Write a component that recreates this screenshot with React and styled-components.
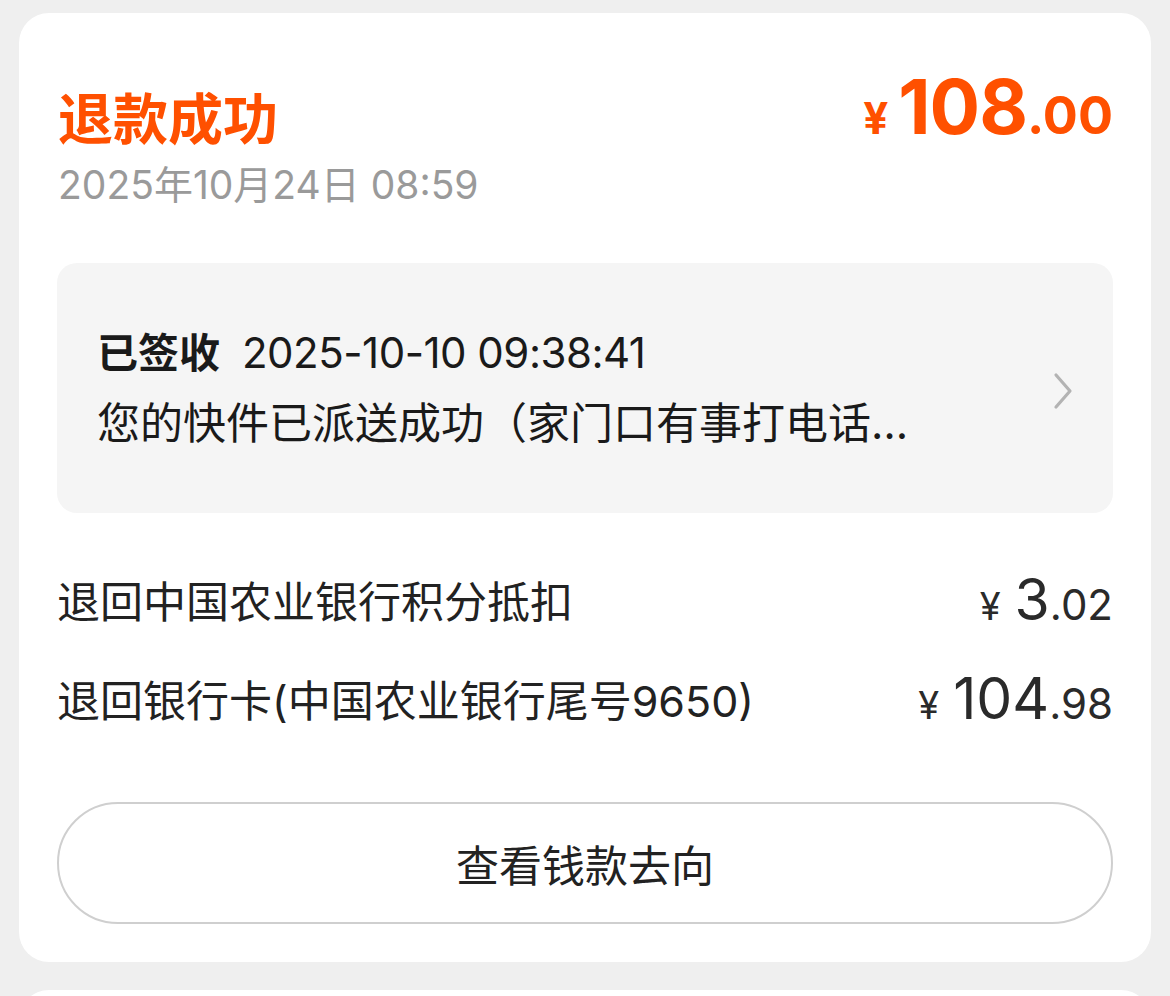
import React from 'react';
import styled, { createGlobalStyle } from 'styled-components';

const GlobalStyle = createGlobalStyle`
    html, body {
        margin: 0;
        padding: 0;
        background: #efefef;
    }
    body {
        font-family: 'Inter', 'Noto Sans CJK SC', sans-serif;
        color: #222;
    }
`;

const rows = [
    { label: '退回中国农业银行积分抵扣', whole: '3', cents: '02' },
    { label: '退回银行卡(中国农业银行尾号9650)', whole: '104', cents: '98' },
];

const App = () => (
    <Page>
        <GlobalStyle />
        <Card>
            <Header>
                <div>
                    <Status>退款成功</Status>
                    <Date>2025年10月24日 08:59</Date>
                </div>
                <Total>
                    <Yen>¥</Yen>
                    <Whole>108</Whole>
                    <Cents>.00</Cents>
                </Total>
            </Header>

            <Logistics>
                <LogisticsText>
                    <LogisticsTitle>
                        <strong>已签收</strong>
                        <span>2025-10-10 09:38:41</span>
                    </LogisticsTitle>
                    <LogisticsDesc>您的快件已派送成功（家门口有事打电话…</LogisticsDesc>
                </LogisticsText>
                <Chevron viewBox="0 0 24 40" width="24" height="40">
                    <path d="M5 4 L19 20 L5 36" fill="none" stroke="#b3b3b3" strokeWidth="3.2" strokeLinecap="round" strokeLinejoin="round" />
                </Chevron>
            </Logistics>

            <Rows>
                {rows.map(row => (
                    <Row key={row.label}>
                        <RowLabel>{row.label}</RowLabel>
                        <RowAmount>
                            <SmallYen>¥</SmallYen>
                            <RowWhole>{row.whole}</RowWhole>
                            <RowCents>.{row.cents}</RowCents>
                        </RowAmount>
                    </Row>
                ))}
            </Rows>

            <Button>查看钱款去向</Button>
        </Card>
        <NextCard />
    </Page>
);

const Page = styled.div`
    padding: 13px 19px 0;
    height: 996px;
    box-sizing: border-box;
    overflow: hidden;
`;

const Card = styled.div`
    background: #fff;
    border-radius: 30px;
    padding: 76px 38px 38px 38px;
    height: 949px;
    box-sizing: border-box;
`;

const Header = styled.div`
    display: flex;
    justify-content: space-between;
    align-items: flex-start;
`;

const Status = styled.div`
    font-size: 55px;
    line-height: 60px;
    font-weight: 700;
    color: #ff5000;
    margin-left: 1px;
`;

const Date = styled.div`
    margin-top: 14px;
    font-size: 39px;
    line-height: 44px;
    color: #9a9a9a;
    margin-left: 1px;
`;

const Total = styled.div`
    display: flex;
    align-items: baseline;
    color: #ff5000;
    font-weight: 700;
    margin-top: -28px;
`;

const Yen = styled.span`
    font-size: 44px;
    margin-right: 10px;
`;

const Whole = styled.span`
    font-size: 75px;
    letter-spacing: -1px;
`;

const Cents = styled.span`
    font-size: 52px;
`;

const Logistics = styled.div`
    margin-top: 56px;
    background: #f5f5f5;
    border-radius: 20px;
    height: 250px;
    box-sizing: border-box;
    padding: 0 38px 0 40px;
    display: flex;
    align-items: center;
    justify-content: space-between;
`;

const LogisticsText = styled.div`
    display: flex;
    flex-direction: column;
    gap: 18px;
`;

const LogisticsTitle = styled.div`
    display: flex;
    align-items: baseline;
    gap: 22px;
    line-height: 52px;
    color: #1a1a1a;

    strong {
        font-weight: 700;
        font-size: 41px;
    }
    span {
        font-size: 42px;
        letter-spacing: -0.5px;
    }
`;

const LogisticsDesc = styled.div`
    font-size: 43px;
    line-height: 52px;
    color: #1a1a1a;
`;

const Chevron = styled.svg`
    flex-shrink: 0;
    margin-top: 6px;
`;

const Rows = styled.div`
    margin-top: 60px;
    display: flex;
    flex-direction: column;
    gap: 47px;
`;

const Row = styled.div`
    display: flex;
    justify-content: space-between;
    align-items: center;
    height: 52px;
`;

const RowLabel = styled.div`
    font-size: 43px;
    color: #222;
`;

const RowAmount = styled.div`
    display: flex;
    align-items: baseline;
    color: #2a2a2a;
`;

const SmallYen = styled.span`
    font-size: 38px;
    margin-right: 14px;
`;

const RowWhole = styled.span`
    font-size: 57px;
`;

const RowCents = styled.span`
    font-size: 42px;
`;

const Button = styled.div`
    margin-top: 78px;
    height: 122px;
    border: 2px solid #cfcfcf;
    border-radius: 61px;
    box-sizing: border-box;
    display: flex;
    align-items: center;
    justify-content: center;
    font-size: 43px;
    color: #222;
`;

const NextCard = styled.div`
    margin-top: 28px;
    background: #fff;
    border-radius: 30px;
    height: 60px;
`;

export default App;
